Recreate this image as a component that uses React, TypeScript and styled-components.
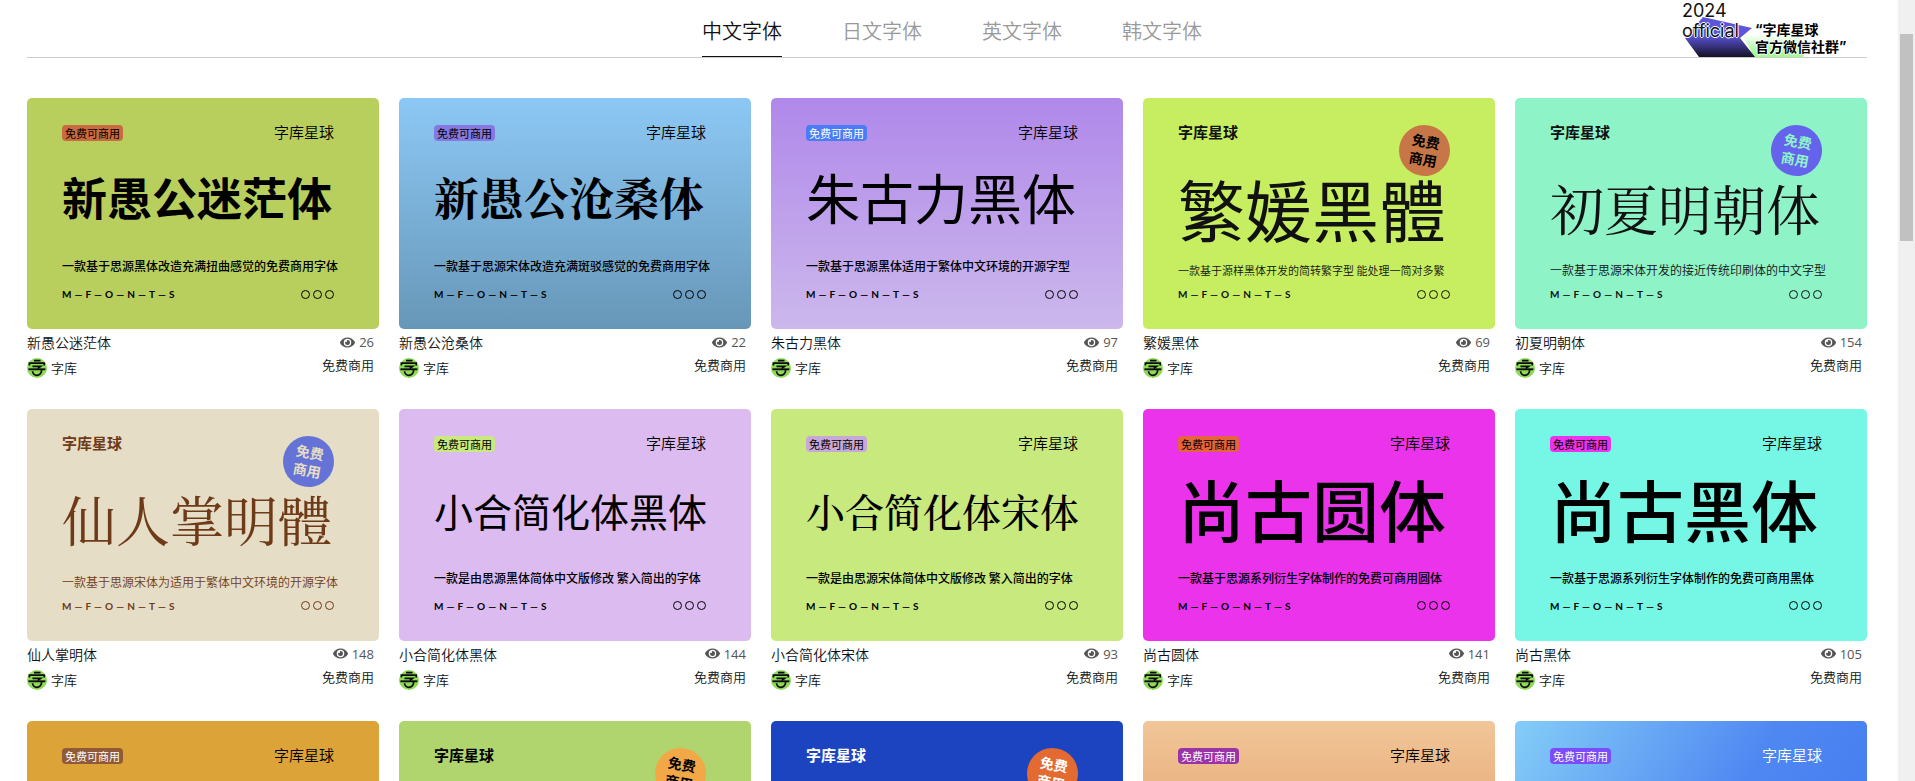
import React from "react";
import styled, { createGlobalStyle } from "styled-components";
import { FaEye } from "react-icons/fa";

const sans = `"Noto Sans CJK SC", "Liberation Sans", sans-serif`;
const serif = `"Noto Serif CJK SC", "Source Han Serif SC", "Noto Sans CJK SC", serif`;

const GlobalStyle = createGlobalStyle`
  *, *::before, *::after { box-sizing: border-box; }
  body { margin: 0; background: #fff; font-family: ${sans}; color: #111; }
  a { color: inherit; text-decoration: none; }
`;

const Page = styled.div`
  display: flex;
  height: 100vh;
  overflow: hidden;
`;

const Main = styled.main`
  flex: 1;
  min-width: 0;
  padding: 0 31px 0 27px;
`;

const ScrollTrack = styled.div`
  flex: none;
  width: 17px;
  padding: 34px 2px 0;
  background: #f0f0f0;
`;

const ScrollThumb = styled.div`
  height: 207px;
  background: #c1c1c1;
`;

const Header = styled.header`
  position: relative;
  display: flex;
  justify-content: center;
  height: 58px;
  border-bottom: 1px solid #ccc;
`;

const Tabs = styled.nav`
  display: flex;
  gap: 60px;
  padding-left: 10px;
`;

const Tab = styled.a<{ $active?: boolean }>`
  height: 57px;
  padding-top: 16px;
  font-size: 20px;
  line-height: 30px;
  font-weight: 350;
  color: ${(p) => (p.$active ? "#111" : "#999")};
  border-bottom: 1px solid ${(p) => (p.$active ? "#111" : "transparent")};
`;

const Community = styled.a`
  position: absolute;
  right: 17px;
  bottom: 0;
  display: flex;
  align-items: flex-end;
  gap: 9px;
  width: 170px;
  height: 57px;
  padding-left: 2px;
  color: #111;
`;

const CommunityShape = styled.svg`
  position: absolute;
  left: 0;
  bottom: 0;
  width: 170px;
  height: 57px;
`;

const CommunityYear = styled.span`
  position: relative;
  align-self: flex-start;
  width: 64px;
  padding-top: 1px;
  font: 400 18px/20px Inter, sans-serif;
  text-shadow: 1px 0 #fff, -1px 0 #fff, 0 1px #fff, 0 -1px #fff;
`;

const CommunityName = styled.span`
  position: relative;
  font-family: Inter, ${sans};
  font-size: 14px;
  line-height: 17px;
  font-weight: 700;
  color: #000;
  padding-bottom: 2px;
  white-space: nowrap;
  text-shadow: 1px 0 #fff, -1px 0 #fff, 0 1px #fff, 0 -1px #fff;
`;

const Grid = styled.section`
  display: grid;
  grid-template-columns: repeat(5, minmax(0, 1fr));
  column-gap: 20px;
  padding-top: 40px;
`;

const Card = styled.article`
  display: flex;
  flex-direction: column;
`;

const Cover = styled.a<{ $bg: string; $ink: string }>`
  position: relative;
  display: flex;
  flex-direction: column;
  aspect-ratio: 35 / 23;
  padding: 25px 45px 26px 35px;
  overflow: hidden;
  border-radius: 5px;
  background: ${(p) => p.$bg};
  color: ${(p) => p.$ink};
  white-space: nowrap;
`;

const CoverTop = styled.div`
  display: flex;
  justify-content: space-between;
  align-items: flex-end;
  height: 18px;
`;

const Tag = styled.span<{ $bg: string; $ink: string }>`
  padding: 0 3px;
  border-radius: 4px;
  background: ${(p) => p.$bg};
  color: ${(p) => p.$ink};
  font-size: 11px;
  line-height: 16px;
`;

const Brand = styled.span<{ $ink: string; $bold?: boolean }>`
  color: ${(p) => p.$ink};
  font-size: 15px;
  line-height: 18px;
  font-weight: ${(p) => (p.$bold ? 700 : 350)};
`;

const Badge = styled.span<{ $bg: string; $ink: string }>`
  position: absolute;
  top: 27px;
  right: 45px;
  display: grid;
  place-content: center;
  width: 51px;
  height: 51px;
  padding-bottom: 2px;
  border-radius: 50%;
  background: ${(p) => p.$bg};
  color: ${(p) => p.$ink};
  font-size: 14px;
  line-height: 18px;
  font-weight: 700;
  text-align: center;
  rotate: 10deg;
`;

const titlePadding = (size: number, low?: boolean) => {
  if (low) return "13px 0 0";
  return size < 45 ? "0" : "0 0 4px";
};

const Title = styled.h2<{ $size: number; $serif?: boolean; $weight: number; $low?: boolean }>`
  display: flex;
  flex: 1;
  align-items: center;
  margin: 0;
  padding: ${(p) => titlePadding(p.$size, p.$low)};
  font-family: ${(p) => (p.$serif ? serif : sans)};
  font-size: ${(p) => p.$size}px;
  line-height: 68px;
  font-weight: ${(p) => p.$weight};
`;

const Desc = styled.p<{ $light?: boolean; $size: number }>`
  margin: 0 0 ${(p) => (p.$light ? 6 : 10)}px;
  font-size: ${(p) => p.$size}px;
  line-height: 18px;
  font-weight: ${(p) => (p.$light ? 350 : 500)};
`;

const CoverBottom = styled.div`
  display: flex;
  justify-content: space-between;
  align-items: center;
  height: 18px;
`;

const Wordmark = styled.span`
  display: flex;
  gap: 3px;
  font: 700 10px/18px Lato, sans-serif;
`;

const Dots = styled.span`
  display: flex;
  gap: 3px;
`;

const Dot = styled.i`
  width: 9px;
  height: 9px;
  border: 1px solid currentColor;
  border-radius: 50%;
`;

const Meta = styled.div`
  display: flex;
  justify-content: space-between;
  height: 80px;
  padding: 3px 5px 0 0;
`;

const MetaColumn = styled.div<{ $end?: boolean }>`
  display: flex;
  flex-direction: column;
  align-items: ${(p) => (p.$end ? "flex-end" : "flex-start")};
  gap: ${(p) => (p.$end ? 3 : 6)}px;
`;

const Name = styled.a`
  font-size: 14px;
  line-height: 20px;
  font-weight: 350;
`;

const Views = styled.span`
  display: flex;
  align-items: center;
  gap: 4px;
  height: 20px;
  color: #555;
  font: 400 13px/20px "Open Sans", sans-serif;
`;

const Author = styled.a`
  display: flex;
  align-items: center;
  gap: 4px;
  font-size: 13px;
  line-height: 20px;
  font-weight: 350;
`;

const License = styled.span`
  font-size: 13px;
  line-height: 20px;
  font-weight: 350;
`;

type Font = {
  name?: string;
  title?: string;
  size?: number;
  serif?: boolean;
  weight?: number;
  desc?: string;
  descSize?: number;
  views?: number;
  bg: string;
  ink?: string;
  accent: string;
  accentInk?: string;
  brandInk?: string;
  badge?: boolean;
};

const fonts: Font[] = [
  { name: "新愚公迷茫体", size: 45, weight: 700, desc: "一款基于思源黑体改造充满扭曲感觉的免费商用字体", views: 26, bg: "#b8cf5e", accent: "#c96a3f" },
  { name: "新愚公沧桑体", size: 45, weight: 700, serif: true, desc: "一款基于思源宋体改造充满斑驳感觉的免费商用字体", views: 22, bg: "linear-gradient(#8cc8f5, #6797b8)", accent: "#8578e0" },
  { name: "朱古力黑体", size: 54, weight: 400, desc: "一款基于思源黑体适用于繁体中文环境的开源字型", views: 97, bg: "linear-gradient(#b088ea, #ccb8ec)", accent: "#4a7cf5", accentInk: "#fff" },
  { name: "繁媛黑体", title: "繁媛黑體", size: 67, weight: 400, desc: "一款基于源样黑体开发的简转繁字型 能处理一简对多繁", descSize: 11, views: 69, bg: "#c7ee61", ink: "#111", accent: "#c77647", accentInk: "#000", badge: true },
  { name: "初夏明朝体", size: 54, weight: 400, serif: true, desc: "一款基于思源宋体开发的接近传统印刷体的中文字型", views: 154, bg: "#8ff3c8", ink: "#111", accent: "#6563ec", accentInk: "#8ff3c8", badge: true },
  { name: "仙人掌明体", title: "仙人掌明體", size: 54, weight: 400, serif: true, desc: "一款基于思源宋体为适用于繁体中文环境的开源字体", views: 148, bg: "#e5ddc6", ink: "#6f3a18", accent: "#6473d5", accentInk: "#e5ddc6", badge: true },
  { name: "小合简化体黑体", size: 39, weight: 400, desc: "一款是由思源黑体简体中文版修改 繁入简出的字体", views: 144, bg: "#dcbbf0", accent: "#c7e97d" },
  { name: "小合简化体宋体", size: 39, weight: 500, serif: true, desc: "一款是由思源宋体简体中文版修改 繁入简出的字体", views: 93, bg: "#c7e97d", accent: "#c8a8d8" },
  { name: "尚古圆体", size: 67, weight: 500, desc: "一款基于思源系列衍生字体制作的免费可商用圆体", views: 141, bg: "#ea33ea", accent: "#e6643c" },
  { name: "尚古黑体", size: 67, weight: 500, desc: "一款基于思源系列衍生字体制作的免费可商用黑体", views: 105, bg: "#76f7e5", accent: "#ea33ea" },
  { bg: "#dca338", accent: "#8f5a35", accentInk: "#fff" },
  { bg: "#b0d56f", accent: "#f3a847", badge: true },
  { bg: "#1c44c0", ink: "#fff", accent: "#e36a31", accentInk: "#fff", badge: true },
  { bg: "linear-gradient(#f1c698, #dc8850)", accent: "#9a33a5", accentInk: "#fff" },
  { bg: "linear-gradient(120deg, #84cdf7, #4f87f2 55%, #4379f0)", brandInk: "#fff", accent: "#7a4cfa", accentInk: "#fff" },
];

const Avatar = () => (
  <svg width="20" height="20" viewBox="0 0 20 20" aria-hidden="true">
    <circle cx="10" cy="10" r="10" fill="#8edb57" />
    <g fill="none" stroke="#0b0b0b" strokeWidth="1.7">
      <path d="M7 2.6h6.5M2.4 7.4V5.2h14.8v2.2" />
      <path d="M5.5 8.3h8.2l-3 2.4" />
      <path d="M1.4 11.3h17" strokeWidth="1.9" />
      <path d="M5.6 13.2c0 5.6 9 5.8 9-1.4" />
    </g>
  </svg>
);

const FontCard = ({ font }: { font: Font }) => {
  const ink = font.ink ?? "#000";
  const accentInk = font.accentInk ?? "#000";
  return (
    <Card>
      <Cover href="#" $bg={font.bg} $ink={ink}>
        <CoverTop>
          {!font.badge && <Tag $bg={font.accent} $ink={accentInk}>免费可商用</Tag>}
          <Brand $ink={font.brandInk ?? ink} $bold={font.badge}>字库星球</Brand>
        </CoverTop>
        {font.badge && (
          <Badge $bg={font.accent} $ink={accentInk}>
            免费
            <br />
            商用
          </Badge>
        )}
        {font.name && (
          <>
            <Title $size={font.size ?? 54} $weight={font.weight ?? 400} $serif={font.serif} $low={font.badge}>
              {font.title ?? font.name}
            </Title>
            <Desc $light={font.badge} $size={font.descSize ?? 12}>{font.desc}</Desc>
            <CoverBottom>
              <Wordmark>
                {"M—F—O—N—T—S".split("").map((c, i) => (
                  <span key={i}>{c}</span>
                ))}
              </Wordmark>
              <Dots>
                <Dot />
                <Dot />
                <Dot />
              </Dots>
            </CoverBottom>
          </>
        )}
      </Cover>
      {font.name && (
        <Meta>
          <MetaColumn>
            <Name href="#">{font.name}</Name>
            <Author href="#">
              <Avatar />
              字库
            </Author>
          </MetaColumn>
          <MetaColumn $end>
            <Views>
              <FaEye size={15} />
              {font.views}
            </Views>
            <License>免费商用</License>
          </MetaColumn>
        </Meta>
      )}
    </Card>
  );
};

const tabs = ["中文字体", "日文字体", "英文字体", "韩文字体"];

export default function App() {
  return (
    <>
      <GlobalStyle />
      <Page>
        <Main>
          <Header>
            <Tabs>
              {tabs.map((tab, i) => (
                <Tab key={tab} href="#" $active={i === 0}>
                  {tab}
                </Tab>
              ))}
            </Tabs>
            <Community href="#">
              <CommunityShape viewBox="0 0 170 57" aria-hidden="true">
                <defs>
                  <linearGradient id="violet" x1="0" y1="0" x2="0" y2="1">
                    <stop offset="0.45" stopColor="#5d55dc" />
                    <stop offset="1" stopColor="#141124" />
                  </linearGradient>
                  <linearGradient id="lime" x1="0" y1="0" x2="0" y2="1">
                    <stop offset="0" stopColor="#a4fb93" stopOpacity="0" />
                    <stop offset="0.8" stopColor="#a4fb93" />
                  </linearGradient>
                </defs>
                <path d="M62 34h56l8 17-3 6H74z" fill="url(#lime)" />
                <path d="M23 17l49 11-12 10 15 19H19L5 38z" fill="url(#violet)" />
              </CommunityShape>
              <CommunityYear>
                2024
                <br />
                official
              </CommunityYear>
              <CommunityName>
                “字库星球
                <br />
                官方微信社群”
              </CommunityName>
            </Community>
          </Header>
          <Grid>
            {fonts.map((font, i) => (
              <FontCard key={i} font={font} />
            ))}
          </Grid>
        </Main>
        <ScrollTrack>
          <ScrollThumb />
        </ScrollTrack>
      </Page>
    </>
  );
}
